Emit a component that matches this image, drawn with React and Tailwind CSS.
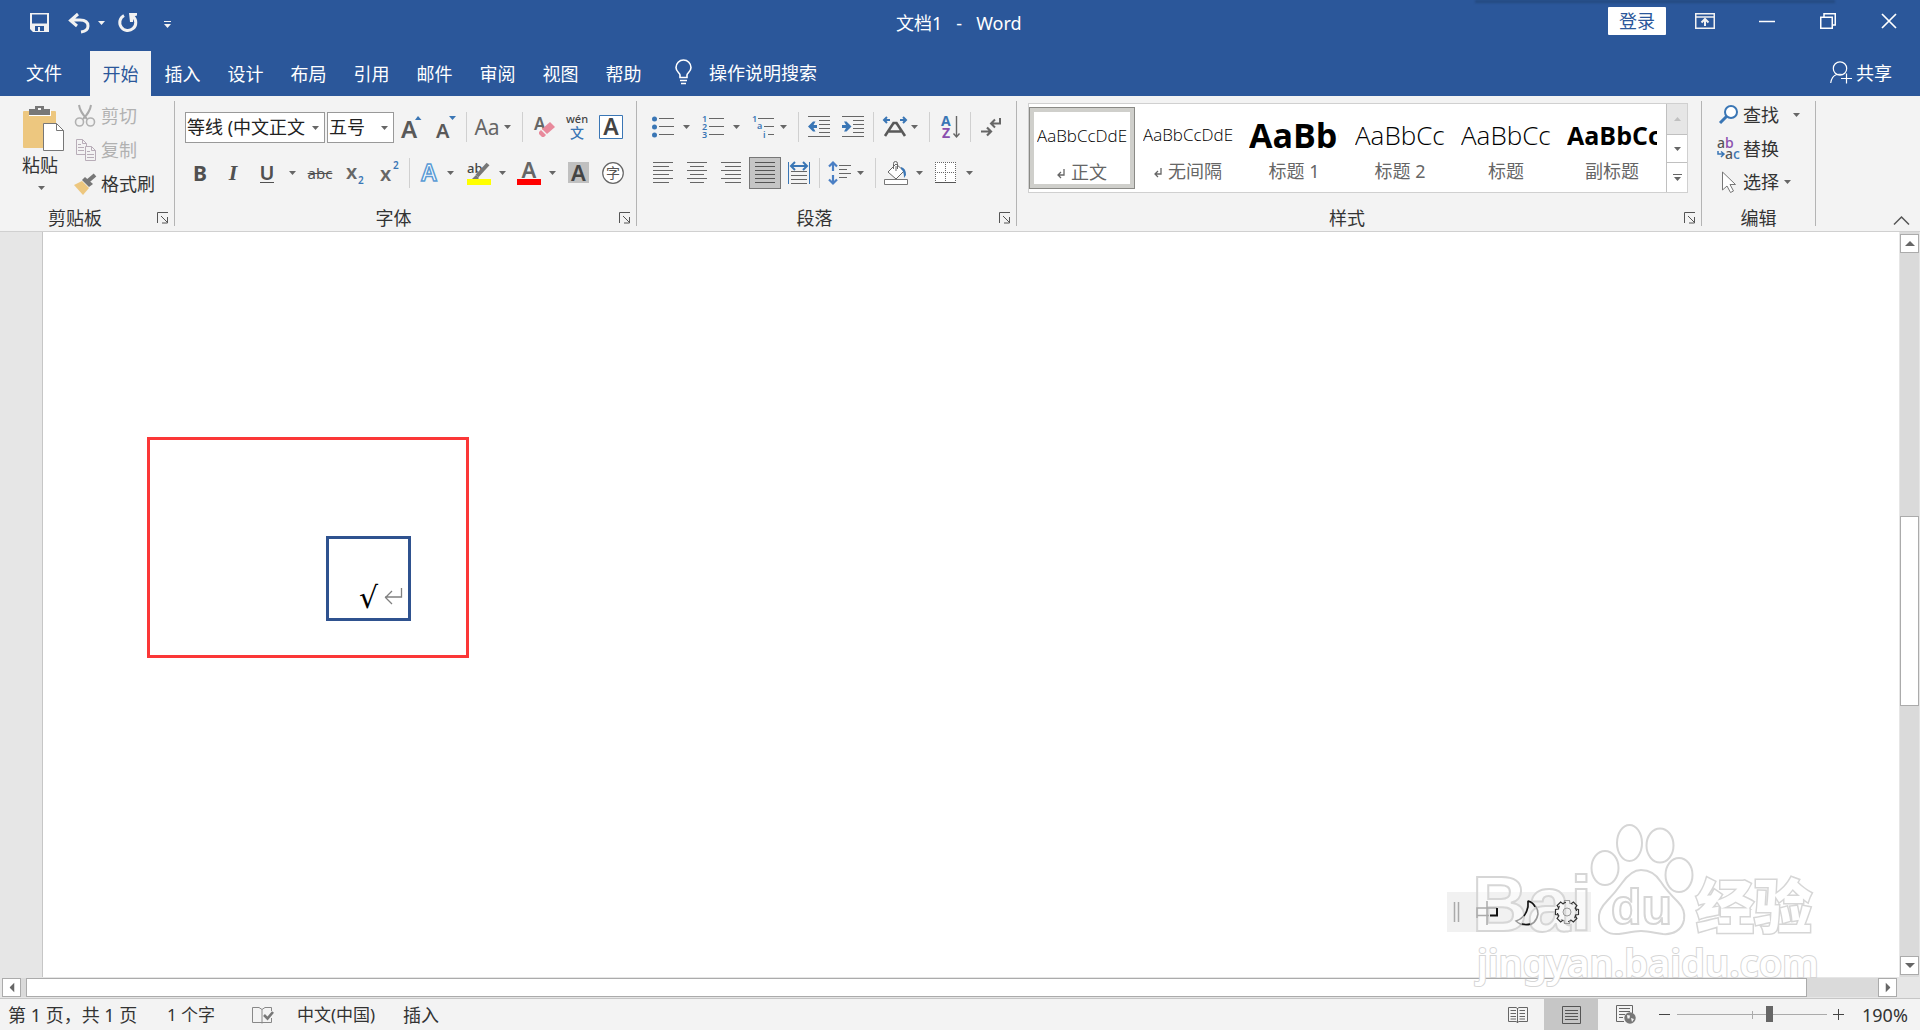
import React from 'react';
import clsx from 'clsx';

const TABS = ['插入', '设计', '布局', '引用', '邮件', '审阅', '视图', '帮助'];

const STYLES = [
    { name: '正文', preview: 'AaBbCcDdE', size: 'text-[17px] font-light', mark: true, active: true },
    { name: '无间隔', preview: 'AaBbCcDdE', size: 'text-[17px] font-light', mark: true },
    { name: '标题 1', preview: 'AaBbC', size: 'text-[34px] font-bold' },
    { name: '标题 2', preview: 'AaBbCc', size: 'text-[26px] font-light' },
    { name: '标题', preview: 'AaBbCc', size: 'text-[26px] font-light' },
    { name: '副标题', preview: 'AaBbCc', size: 'text-[25px] font-bold' }
];

/* ---------- small shared pieces ---------- */

const Caret = ({ className = 'text-[#666]' }) => (
    <svg width="7" height="4" viewBox="0 0 7 4" className={clsx('shrink-0', className)}>
        <path d="M0 0h7L3.5 4z" fill="currentColor" />
    </svg>
);

const Tool = ({ label, className, children }) => (
    <button
        type="button"
        aria-label={label}
        title={label}
        className={clsx('h-8 shrink-0 flex items-center justify-center whitespace-nowrap', className)}
    >
        {children}
    </button>
);

const Drop = ({ label, className }) => (
    <Tool label={`${label}选项`} className={clsx('w-[7px]', className)}>
        <Caret />
    </Tool>
);

const Sep = ({ className }) => <div className={clsx('w-px h-[30px] shrink-0 bg-[#d0d0d0]', className)} />;

const Icon = ({ w = 22, h = 22, children, className }) => (
    <svg width={w} height={h} viewBox={`0 0 ${w} ${h}`} fill="none" className={clsx('shrink-0 overflow-visible', className)}>
        {children}
    </svg>
);

// horizontal rules: list of [x1, x2, y]
const Rules = ({ rows, color = '#666' }) => (
    <path d={rows.map(([a, b, y]) => `M${a} ${y + 0.5}H${b}`).join('')} stroke={color} />
);

const Group = ({ title, launcher = true, className, children }) => (
    <section aria-label={title} className={clsx('flex flex-col shrink-0', className)}>
        <div className="h-28">{children}</div>
        <div className="h-5 flex items-center text-[#333]">
            <span className="flex-1 text-center">{title}</span>
            {launcher && (
                <button type="button" aria-label={`${title}设置`} className="w-6 h-5 flex items-center pl-[7px]">
                    <Icon w={12} h={12}>
                        <path d="M.5 11V.5H11M4 4l6 6M10.500 5v6H5" stroke="#555" />
                    </Icon>
                </button>
            )}
        </div>
    </section>
);

const Divider = () => <div className="w-px shrink-0 bg-[#b4b4b4] mt-[5px] mb-[5px]" />;

/* ---------- title bar and tabs ---------- */

const TitleBar = () => (
    <div className="relative h-[51px] flex items-start justify-between">
        <div className="absolute top-0 right-[85px] w-[360px] h-[3px] bg-[#244a80] blur-[1px]" />
        <div className="flex items-center h-[45px] pl-[30px]">
            <button type="button" aria-label="保存">
                <Icon w={19} h={19}>
                    <path
                        fillRule="evenodd"
                        fill="#f2f2f2"
                        d="M0 0h19v19H3l-3-3zM2 1.500v9h15v-9zM5 13v5h3v-4h2v4h4v-5z"
                    />
                </Icon>
            </button>
            <button type="button" aria-label="撤消" className="ml-[19px]">
                <Icon w={22} h={20}>
                    <path d="M10 1L2.500 7.500 9 13M3 7h9q8 0 8 6 0 5-7 6" stroke="#f2f2f2" strokeWidth="3" />
                </Icon>
            </button>
            <button type="button" aria-label="撤消选项" className="ml-2">
                <Caret className="text-[#f2f2f2]" />
            </button>
            <button type="button" aria-label="重复" className="ml-[13px]">
                <Icon w={20} h={20}>
                    <path d="M6 2.500A8 8 0 1 0 15 3.500" stroke="#f2f2f2" strokeWidth="3" />
                    <path d="M11 0h8v2.500l-3.500 1-.5 5.500h-3z" fill="#f2f2f2" />
                </Icon>
            </button>
            <button type="button" aria-label="自定义快速访问工具栏" className="ml-[26px] mt-1">
                <Icon w={7} h={8}>
                    <path d="M0 .5h7" stroke="#f2f2f2" />
                    <path d="M0 3h7L3.500 7z" fill="#f2f2f2" />
                </Icon>
            </button>
        </div>
        <h1 className="absolute left-1/2 top-[11px] -ml-16 text-white whitespace-pre">文档1   -   Word</h1>
        <div className="relative flex items-center pr-[23px] pt-[7px]">
            <button type="button" className="w-[58px] h-7 bg-white text-[#2b579a] rounded-[1px] leading-7">
                登录
            </button>
            <button type="button" aria-label="功能区显示选项" className="ml-[29px]">
                <Icon w={20} h={16}>
                    <path d="M.75.75h18.500v14.500H.75zM1 4h18" stroke="#f2f2f2" strokeWidth="1.500" />
                    <path d="M10 13V7M6.500 9.500L10 6l3.500 3.500" stroke="#f2f2f2" strokeWidth="2" />
                </Icon>
            </button>
            <button type="button" aria-label="最小化" className="ml-11">
                <Icon w={16} h={16}>
                    <path d="M0 8.500h16" stroke="#fff" strokeWidth="1.500" />
                </Icon>
            </button>
            <button type="button" aria-label="向下还原" className="ml-[45px]">
                <Icon w={16} h={16}>
                    <path d="M.75 4.250h11.500v11H.75zM4 4V.75h11.250V12H12.500" stroke="#fff" strokeWidth="1.500" />
                </Icon>
            </button>
            <button type="button" aria-label="关闭" className="ml-[45px]">
                <Icon w={16} h={16}>
                    <path d="M1 1l14 14M15 1L1 15" stroke="#fff" strokeWidth="1.700" />
                </Icon>
            </button>
        </div>
    </div>
);

const TabRow = () => (
    <nav className="h-[45px] flex items-stretch text-white">
        <button type="button" className="w-[90px] pr-0.5 pb-0.5">文件</button>
        <button type="button" className="w-[61px] bg-[#f3f3f3] text-[#2b579a]">开始</button>
        {TABS.map(tab => (
            <button key={tab} type="button" className="w-[63px] whitespace-nowrap">{tab}</button>
        ))}
        <button type="button" className="flex items-center ml-5 pb-0.5">
            <Icon w={17} h={25}>
                <path
                    d="M5 17.500v-2.500c0-2-4-3-4-7.500a7.500 7.500 0 0 1 15 0c0 4.500-4 5.500-4 7.500v2.500zM5 20.500h7M6 23.500h5"
                    stroke="#fff"
                    strokeWidth="1.600"
                />
            </Icon>
            <span className="ml-[17px]">操作说明搜索</span>
        </button>
        <button type="button" className="flex items-center ml-auto mr-7 pb-0.5">
            <Icon w={22} h={23}>
                <circle cx="10" cy="7.500" r="6.700" stroke="#fff" strokeWidth="1.200" />
                <path d="M.7 22q1-7 6-8.500 3-.5 6 0M16.500 12.500v10M11 17.500h11" stroke="#fff" strokeWidth="1.200" />
            </Icon>
            <span className="ml-1">共享</span>
        </button>
    </nav>
);

/* ---------- ribbon groups ---------- */

const ClipboardGroup = () => (
    <Group title="剪贴板" className="w-[174px]">
        <div className="flex pt-2">
            <button type="button" className="ml-[22px] w-[42px] flex flex-col items-start text-[#333]">
                <Icon w={42} h={48}>
                    <rect x="1" y="7" width="33" height="37" rx="1" fill="#edc77f" />
                    <path d="M7 6h22v6H7z" fill="#fff" />
                    <path d="M7 5h6V2h9v3h6v6H7zM16 4v2h3V4z" fill="#777" fillRule="evenodd" />
                    <path d="M21.500 19.500h13l7 7v20h-20z" fill="#fff" stroke="#777" />
                    <path d="M34.500 19.500v7h7" stroke="#777" />
                </Icon>
                <span className="leading-[26px]">粘贴</span>
                <Caret className="text-[#666] ml-4 mt-2" />
            </button>
            <div className="flex flex-col ml-2.5 -mt-[5px]">
                <button type="button" className="flex items-center h-[34px] text-[#b1b1b1]">
                    <Icon w={22} h={22}>
                        <path d="M5 0q1 7 8 14M17 0q-1 7-8 14" stroke="#aaa" strokeWidth="2" />
                        <circle cx="5.500" cy="17" r="4" stroke="#b1b1b1" strokeWidth="1.600" />
                        <circle cx="16.500" cy="17" r="4" stroke="#b1b1b1" strokeWidth="1.600" />
                    </Icon>
                    <span className="ml-[5px]">剪切</span>
                </button>
                <button type="button" className="flex items-center h-[34px] text-[#b1b1b1]">
                    <Icon w={22} h={22}>
                        <path d="M2.500.5h6l4 4v11h-10zM8.500.5v4h4" stroke="#b8adb8" />
                        <path d="M11.500 7.500h6l4 4v10h-10z" fill="#f3f3f3" stroke="#b8adb8" />
                        <path d="M4 5.500h3M4 8.500h6M4 11.500h6M13 12.500h3M13 15.500h7M13 18.500h7M17.500 7.500v4h4" stroke="#b8adb8" />
                    </Icon>
                    <span className="ml-[5px]">复制</span>
                </button>
                <button type="button" className="flex items-center h-[34px] text-[#333]">
                    <Icon w={22} h={22}>
                        <path d="M0 12l8-4 7 7-6 7z" fill="#edc77f" />
                        <path d="M8 7l3-3 8 7-4 3z" fill="#777" />
                        <path d="M14 8l7-6" stroke="#777" strokeWidth="4" />
                    </Icon>
                    <span className="ml-[5px]">格式刷</span>
                </button>
            </div>
        </div>
    </Group>
);

const Combo = ({ label, value, className }) => (
    <div className={clsx('relative h-[31px] shrink-0', className)}>
        <select
            aria-label={label}
            defaultValue={value}
            className="w-full h-full appearance-none bg-white border border-[#999] pl-px pr-4 text-[#222] overflow-hidden"
        >
            <option>{value}</option>
        </select>
        <Caret className="text-[#666] absolute right-1.5 top-3.5 pointer-events-none" />
    </div>
);

const FontGroup = () => (
    <Group title="字体" className="w-[461px]">
        <div className="flex items-center h-8 mt-[15px] text-[#555]">
            <Combo label="字体名称" value="等线 (中文正文" className="w-[140px] ml-2.5" />
            <Combo label="字号" value="五号" className="w-[67px] ml-0.5" />
            <Tool label="增大字号" className="w-5 ml-2">
                <Icon w={20} h={24}>
                    <text x="-1" y="23" fontSize="24" fontWeight="600" fill="#595959">A</text>
                    <path d="M13 5l3-4 3.500 4z" fill="#3a76b5" />
                </Icon>
            </Tool>
            <Tool label="减小字号" className="w-5 ml-[15px]">
                <Icon w={20} h={24}>
                    <text x="-1" y="23" fontSize="20" fontWeight="600" fill="#595959">A</text>
                    <path d="M12 1h7l-3.500 4z" fill="#3a76b5" />
                </Icon>
            </Tool>
            <Sep className="ml-[9px]" />
            <Tool label="更改大小写" className="w-6 ml-2 text-[21px] text-[#666]">Aa</Tool>
            <Drop label="更改大小写" className="ml-[5px]" />
            <Sep className="ml-[11px]" />
            <Tool label="清除所有格式" className="w-5 ml-3">
                <Icon w={20} h={22}>
                    <text x="-1" y="14" fontSize="17" fontWeight="600" fill="#666">A</text>
                    <path d="M7 13l8-7 5 5-8 7z" fill="#e8899b" />
                    <path d="M6 14l5 5-2 2H7l-3-3v-2z" fill="#e8899b" />
                </Icon>
            </Tool>
            <Tool label="拼音指南" className="w-[22px] ml-[11px]">
                <Icon w={22} h={24}>
                    <text x="11" y="8" fontSize="11" fontWeight="500" textAnchor="middle" fill="#444">wén</text>
                    <text x="11" y="23" fontSize="14" fontWeight="500" textAnchor="middle" fill="#3a76b5">文</text>
                </Icon>
            </Tool>
            <Tool label="字符边框" className="w-6 ml-[11px]">
                <Icon w={24} h={24}>
                    <path d="M.5.5h23v23H.5z" fill="#fff" stroke="#3a76b5" />
                    <text x="12" y="20" fontSize="23" fontWeight="600" textAnchor="middle" fill="#444">A</text>
                </Icon>
            </Tool>
        </div>
        <div className="flex items-center h-8 mt-[14px] text-[#505050]">
            <Tool label="加粗" className="w-4 ml-[17px] text-[21px] font-bold">B</Tool>
            <Tool label="倾斜" className="w-4 ml-[17px] text-[22px] font-bold italic font-['Liberation_Serif',serif]">I</Tool>
            <Tool label="下划线" className="w-4 ml-[18px] text-[20px] font-semibold">
                <span className="border-b border-[#505050] leading-[19px]">U</span>
            </Tool>
            <Drop label="下划线" className="ml-3.5" />
            <Tool label="删除线" className="w-6 ml-3 text-[15px] line-through">abc</Tool>
            <Tool label="下标" className="w-5 ml-[14px]">
                <Icon w={20} h={24}>
                    <text x="0" y="18" fontSize="20" fontWeight="600" fill="#666">x</text>
                    <text x="12" y="23" fontSize="10" fontWeight="600" fill="#3a76b5">2</text>
                </Icon>
            </Tool>
            <Tool label="上标" className="w-5 ml-[14px]">
                <Icon w={20} h={24}>
                    <text x="0" y="20" fontSize="20" fontWeight="600" fill="#666">x</text>
                    <text x="13" y="8" fontSize="10" fontWeight="600" fill="#3a76b5">2</text>
                </Icon>
            </Tool>
            <Sep className="ml-[9px]" />
            <Tool label="文本效果和版式" className="w-[18px] ml-2.5">
                <Icon w={18} h={24}>
                    <text x="9" y="20" fontSize="23" fontWeight="600" textAnchor="middle" fill="#fff" stroke="#5b9bd5" strokeWidth="1.500">A</text>
                </Icon>
            </Tool>
            <Drop label="文本效果" className="ml-[9px]" />
            <Tool label="文本突出显示颜色" className="w-6 ml-[13px]">
                <Icon w={24} h={24}>
                    <text x="0" y="12" fontSize="13" fontWeight="500" fill="#444">ab</text>
                    <path d="M10 15L21 3" stroke="#777" strokeWidth="4" />
                    <path d="M5 18l4-4 3 3-1 1z" fill="#777" />
                    <path d="M0 18h24v6H0z" fill="#ff0" />
                </Icon>
            </Tool>
            <Drop label="突出显示" className="ml-2" />
            <Tool label="字体颜色" className="w-6 ml-[11px]">
                <Icon w={24} h={24}>
                    <text x="12" y="17" fontSize="22" fontWeight="600" textAnchor="middle" fill="#666">A</text>
                    <path d="M0 18h24v6H0z" fill="red" />
                </Icon>
            </Tool>
            <Drop label="字体颜色" className="ml-2" />
            <Tool label="字符底纹" className="w-[21px] ml-3">
                <Icon w={21} h={22}>
                    <path d="M0 0h21v21H0z" fill="#c0c0c0" />
                    <text x="10.500" y="19" fontSize="22" fontWeight="600" textAnchor="middle" fill="#444">A</text>
                </Icon>
            </Tool>
            <Tool label="带圈字符" className="w-[22px] ml-[13px]">
                <Icon w={22} h={22}>
                    <circle cx="11" cy="11" r="10.300" fill="#fff" stroke="#666" strokeWidth="1.200" />
                    <text x="11" y="16" fontSize="14" textAnchor="middle" fill="#555">字</text>
                </Icon>
            </Tool>
        </div>
    </Group>
);

const LINES = [0, 4, 8, 12, 16, 20];

const ParagraphGroup = () => (
    <Group title="段落" className="w-[379px]">
        <div className="flex items-center h-8 mt-[15px]">
            <Tool label="项目符号" className="w-[22px] ml-[15px]">
                <Icon>
                    <circle cx="2.500" cy="3" r="2.500" fill="#3a76b5" />
                    <circle cx="2.500" cy="11" r="2.500" fill="#3a76b5" />
                    <circle cx="2.500" cy="19" r="2.500" fill="#3a76b5" />
                    <Rules rows={[[7, 22, 2], [7, 22, 10], [7, 22, 18]]} />
                </Icon>
            </Tool>
            <Drop label="项目符号" className="ml-[9px]" />
            <Tool label="编号" className="w-[22px] ml-3">
                <Icon w={22} h={24}>
                    <g fontSize="9" fontWeight="600" fill="#3a76b5">
                        <text x="0" y="7">1</text>
                        <text x="0" y="15">2</text>
                        <text x="0" y="23">3</text>
                    </g>
                    <Rules rows={[[7, 22, 3], [7, 22, 11], [7, 22, 19]]} />
                </Icon>
            </Tool>
            <Drop label="编号" className="ml-[9px]" />
            <Tool label="多级列表" className="w-[22px] ml-3">
                <Icon w={22} h={24}>
                    <g fontSize="9" fontWeight="600" fill="#3a76b5">
                        <text x="0" y="7">1</text>
                        <text x="5" y="14">a</text>
                        <text x="11" y="23">i</text>
                    </g>
                    <Rules rows={[[6, 22, 3], [12, 22, 11], [16, 22, 19]]} />
                </Icon>
            </Tool>
            <Drop label="多级列表" className="ml-1.5" />
            <Sep className="ml-[11px]" />
            <Tool label="减少缩进量" className="w-[22px] ml-[9px]">
                <Icon>
                    <Rules rows={[[0, 22, 0], [11, 22, 4], [11, 22, 8], [11, 22, 12], [11, 22, 16], [0, 22, 20]]} />
                    <path d="M0 10.500l5-5h2.500l-2 3.500H9v3H5.500l2 3.500H5z" fill="#3a76b5" />
                </Icon>
            </Tool>
            <Tool label="增加缩进量" className="w-[22px] ml-3">
                <Icon>
                    <Rules rows={[[0, 22, 0], [11, 22, 4], [11, 22, 8], [11, 22, 12], [11, 22, 16], [0, 22, 20]]} />
                    <path d="M9.500 10.500l-5-5H2L4 9H0v3h4l-2 3.500h2.500z" fill="#3a76b5" />
                </Icon>
            </Tool>
            <Sep className="ml-[9px]" />
            <Tool label="中文版式" className="w-6 ml-[9px]">
                <Icon w={24} h={20}>
                    <path d="M4 0L1 3l3 3M1.500 3H7M20 0l3 3-3 3M22.500 3H17" stroke="#3a76b5" strokeWidth="2" />
                    <path d="M2 19L10.500 6h3L22 19M6 14.500h12" stroke="#595959" strokeWidth="2.600" />
                </Icon>
            </Tool>
            <Drop label="中文版式" className="ml-1" />
            <Sep className="ml-[11px]" />
            <Tool label="排序" className="w-[18px] ml-3">
                <Icon w={18} h={24}>
                    <text x="-1" y="11" fontSize="14" fontWeight="700" fill="#3a76b5">A</text>
                    <text x="0" y="23" fontSize="14" fontWeight="700" fill="#8a4fae">Z</text>
                    <path d="M14.500 1v21M11.500 18.500l3 3.500 3-3.500" stroke="#666" strokeWidth="1.400" />
                </Icon>
            </Tool>
            <Sep className="ml-2.5" />
            <Tool label="显示编辑标记" className="w-5 ml-2.5">
                <Icon w={20} h={20}>
                    <path d="M19 1v5.500h-9M14 2.500L10 6.500l4 4" stroke="#666" strokeWidth="2" />
                    <path d="M0 14.500h10M6 10.500l4 4-4 4" stroke="#666" strokeWidth="2.200" />
                </Icon>
            </Tool>
        </div>
        <div className="flex items-center h-8 mt-[14px]">
            <Tool label="左对齐" className="w-5 ml-4">
                <Icon w={20}><Rules rows={LINES.map((y, i) => [0, i % 2 ? 16 : 20, y])} /></Icon>
            </Tool>
            <Tool label="居中" className="w-5 ml-3.5">
                <Icon w={20}><Rules rows={LINES.map((y, i) => (i % 2 ? [3, 17, y] : [0, 20, y]))} /></Icon>
            </Tool>
            <Tool label="右对齐" className="w-5 ml-3.5">
                <Icon w={20}><Rules rows={LINES.map((y, i) => [i % 2 ? 4 : 0, 20, y])} /></Icon>
            </Tool>
            <Tool label="两端对齐" className="w-8 ml-2 bg-[#c5c5c5] border border-[#777]">
                <Icon w={20}><Rules rows={LINES.map(y => [0, 20, y])} color="#555" /></Icon>
            </Tool>
            <Tool label="分散对齐" className="w-[22px] ml-[7px]">
                <Icon>
                    <path d="M.5 0v22M21.500 0v22" stroke="#3a76b5" />
                    <path d="M3 4h16M7 0L3 4l4 4M15 0l4 4-4 4" stroke="#3a76b5" strokeWidth="2" />
                    <Rules rows={[[3, 19, 9], [3, 19, 13], [3, 19, 17], [3, 19, 21]]} />
                </Icon>
            </Tool>
            <Sep className="ml-[9px]" />
            <Tool label="行和段落间距" className="w-[22px] ml-[9px]">
                <Icon w={22} h={24}>
                    <path d="M4 2v8M0 5.500L4 1.500l4 4M4 14v8M0 18.500l4 4 4-4" stroke="#4a7fc4" strokeWidth="2.200" />
                    <Rules rows={[[10, 22, 4], [10, 18, 8], [10, 22, 12], [10, 18, 16]]} />
                </Icon>
            </Tool>
            <Drop label="间距" className="ml-1.5" />
            <Sep className="ml-[11px]" />
            <Tool label="底纹" className="w-6 ml-2">
                <Icon w={24} h={24}>
                    <path d="M4 11l8-8 8 7-8 8z" fill="#fff" stroke="#666" />
                    <path d="M9.500 8V2.500q0-2 2-2t2 2V8M12 5v5" stroke="#666" />
                    <path d="M17 6q5 1 5 8l-2 3q0-7-3-9z" fill="#3a76b5" />
                    <path d="M.5 18.500h23v5H.5z" fill="#fff" stroke="#777" />
                </Icon>
            </Tool>
            <Drop label="底纹" className="ml-2" />
            <Tool label="边框" className="w-[22px] ml-3">
                <Icon>
                    <path d="M0 0h21v21H0z" fill="#fff" />
                    <path d="M0 .5h21M.5 0v21M20.500 0v21M10.500 0v21M0 10.500h21" stroke="#666" strokeDasharray="1 1" />
                    <path d="M0 20.500h21" stroke="#555" />
                </Icon>
            </Tool>
            <Drop label="边框" className="ml-[9px]" />
        </div>
    </Group>
);

const StyleTile = ({ item }) => (
    <button
        type="button"
        className={clsx(
            'w-[106px] h-[82px] shrink-0 flex flex-col items-center',
            item.active && 'border border-[#8a8a86] ring-4 ring-inset ring-[#cfcfcb]'
        )}
    >
        <span
            className={clsx(
                "w-[90px] h-[50px] shrink-0 overflow-hidden whitespace-nowrap text-left text-black font-['Open_Sans','Noto_Sans',sans-serif] leading-[56px]",
                item.size
            )}
        >
            {item.preview}
        </span>
        <span className="flex items-center leading-7 text-[#666]">
            {item.mark && (
                <Icon w={8} h={10} className="mr-1.5 mt-1">
                    <path d="M7 0v6H1M4 3L1 6l3 3" stroke="#666" strokeWidth="1.300" />
                </Icon>
            )}
            {item.name}
        </span>
    </button>
);

const StylesGroup = () => (
    <Group title="样式" className="flex-1 min-w-0">
        <div className="ml-[11px] mr-[13px] mt-[7px] h-[90px] flex bg-white border border-[#d0d0d0]">
            <div className="flex-1 min-w-0 flex items-center overflow-hidden">
                {STYLES.map(item => <StyleTile key={item.name} item={item} />)}
            </div>
            <div className="w-[21px] shrink-0 flex flex-col border-l border-[#c0c0c0]">
                <button type="button" aria-label="上一行" className="flex-1 flex items-center justify-center bg-[#e6e6e6]">
                    <Caret className="text-[#c0c0c0] rotate-180" />
                </button>
                <button type="button" aria-label="下一行" className="h-7 flex items-center justify-center border-t border-[#c0c0c0]">
                    <Caret />
                </button>
                <button type="button" aria-label="其他样式" className="h-[30px] flex items-center justify-center border-t border-[#c0c0c0]">
                    <Icon w={9} h={8}>
                        <path d="M0 .5h9" stroke="#666" />
                        <path d="M1 3h7L4.500 7z" fill="#666" />
                    </Icon>
                </button>
            </div>
        </div>
    </Group>
);

const EditingGroup = () => (
    <Group title="编辑" launcher={false} className="w-[113px]">
        <div className="flex flex-col items-start pt-0.5 pl-[15px] text-[#333]">
            <button type="button" className="flex items-center h-[34px]">
                <Icon w={23} h={20}>
                    <circle cx="14" cy="7" r="6" fill="#fff" stroke="#3a76b5" strokeWidth="2" />
                    <path d="M9.500 11.500L3 18" stroke="#3a76b5" strokeWidth="3" />
                </Icon>
                <span className="ml-[3px]">查找</span>
                <Caret className="text-[#666] ml-3.5" />
            </button>
            <button type="button" className="flex items-center h-[34px]">
                <Icon w={23} h={24}>
                    <g fontSize="14" fontWeight="500" fill="#555">
                        <text x="0" y="11">a<tspan fill="#8a4fae">b</tspan></text>
                        <text x="8" y="22">a<tspan fill="#3a76b5">c</tspan></text>
                    </g>
                    <path d="M1 14v3h5M4 14.500l3 2.500-3 3" stroke="#3a76b5" strokeWidth="1.500" />
                </Icon>
                <span className="ml-[3px]">替换</span>
            </button>
            <button type="button" className="flex items-center h-8">
                <Icon w={23} h={23}>
                    <path d="M5.500 1v18l4.500-4 3.500 6.500 3-1.500-3.500-6.500h5.500z" fill="#fff" stroke="#777" />
                </Icon>
                <span className="ml-[3px]">选择</span>
                <Caret className="text-[#666] ml-[5px]" />
            </button>
        </div>
    </Group>
);

const Ribbon = () => (
    <div className="h-[136px] shrink-0 flex bg-[#f3f3f3] border-b border-[#d0d0d0]">
        <ClipboardGroup />
        <Divider />
        <FontGroup />
        <Divider />
        <ParagraphGroup />
        <Divider />
        <StylesGroup />
        <Divider />
        <EditingGroup />
        <Divider />
        <div className="w-[104px] shrink-0 flex items-end justify-end pr-2.5 pb-1.5">
            <button type="button" aria-label="折叠功能区">
                <Icon w={17} h={9}>
                    <path d="M1 8.500l7.500-7.500L16 8.500" stroke="#555" strokeWidth="1.500" />
                </Icon>
            </button>
        </div>
    </div>
);

/* ---------- document area ---------- */

const ScrollButton = ({ label, className }) => (
    <button
        type="button"
        aria-label={label}
        className="w-[19px] h-[19px] shrink-0 flex items-center justify-center bg-white border border-[#ababab]"
    >
        <svg width="10" height="5" viewBox="0 0 10 5" className={className}>
            <path d="M0 0h10L5 5z" fill="#666" />
        </svg>
    </button>
);

const PAW = 'M201 60c9 0 15 4 20 12s11 14 17 20 7 12 6 18c-2 10-11 15-21 14-8-1-14-3-22-3s-14 2-22 3c-11 1-19-5-20-14-1-7 2-13 8-19s10-11 15-18 11-13 19-13z';

const GEAR_TEETH = [0, 45, 90, 135, 180, 225, 270, 315];

const Watermark = () => (
    <svg
        width="400"
        height="180"
        viewBox="0 0 400 180"
        className="absolute right-20 bottom-2 pointer-events-none overflow-visible"
        fill="#fff"
        stroke="#d6d6d6"
        strokeWidth="1.500"
        fillOpacity="0.6"
    >
        <path d="M7 82h144v40H7z" fill="#f1f1f1" fillOpacity="1" stroke="none" />
        <path d="M14.500 92v20M18.500 92v20" stroke="#aaa" />
        <g fontWeight="700" fontFamily="'Liberation Sans', sans-serif" strokeWidth="2">
            <text x="32" y="121" fontSize="77">Bai</text>
            <ellipse cx="165" cy="58" rx="13.500" ry="17" />
            <ellipse cx="189.500" cy="33" rx="12.500" ry="18" />
            <ellipse cx="220" cy="35.500" rx="13.500" ry="17" />
            <ellipse cx="239" cy="65" rx="13.500" ry="17" />
            <path d={PAW} fillOpacity="1" />
            <text x="171" y="114" fontSize="50">du</text>
            <text
                x="256"
                y="118"
                fontSize="58"
                fontWeight="900"
                strokeWidth="3"
                paintOrder="stroke"
                fillOpacity="1"
                fontFamily="'Noto Sans CJK SC', sans-serif"
            >
                经验
            </text>
        </g>
        <text
            x="37"
            y="167"
            fontSize="38"
            fontWeight="600"
            strokeWidth="2"
            paintOrder="stroke"
            fillOpacity="1"
            fontFamily="'Noto Sans', sans-serif"
        >
            jingyan.baidu.com
        </text>
        <g fill="none">
            <path d="M47 91v24M37 108V98h20M37 105.500h12" stroke="#aaa" />
            <path d="M50 105.500h7V98" stroke="#111" strokeWidth="2" />
            <path d="M76 111q12-4 12-20 10 4 10 13-2 11-12 11-6 0-10-4z" stroke="#999" />
            <path d="M88 91v6q-1 5-4 9M88 91q5 1 7 6M82 114q5 1 8 0" stroke="#111" />
            <circle cx="127" cy="102" r="4" stroke="#999" strokeWidth="1" />
            {GEAR_TEETH.map((angle, i) => (
                <path
                    key={angle}
                    d="M124 93.500l.5-3h5l.5 3q2 0 3 1"
                    transform={`rotate(${angle} 127 102)`}
                    stroke={i % 4 === 0 ? '#999' : '#333'}
                    strokeWidth="1.200"
                />
            ))}
        </g>
    </svg>
);

const DocumentArea = () => (
    <main className="relative flex-1 min-h-0 flex flex-col bg-[#e6e6e6]">
        <div className="flex-1 min-h-0 flex">
            <div className="w-[42px] shrink-0" />
            <div className="flex-1 bg-white border-l border-[#c6c6c6] pl-[104px] pt-[205px] overflow-hidden">
                <div className="w-[322px] h-[221px] border-[3px] border-[#fb3737] pl-44 pt-24">
                    <div className="w-[85px] h-[85px] border-[3px] border-[#2f528f] flex items-end justify-end pr-1.5 pb-1">
                        <span className="text-black text-[30px] leading-8 font-['DejaVu_Sans',sans-serif]">√</span>
                        <Icon w={18} h={17} className="ml-1.5 mb-[9px]">
                            <path d="M17.500 0v9H1M8 3L1.500 9.500 8 16" stroke="#808080" strokeWidth="1.300" />
                        </Icon>
                    </div>
                </div>
            </div>
            <div className="w-[21px] shrink-0 flex flex-col items-center bg-[#dadada] border-x border-[#e6e6e6] pt-0.5 pb-0.5">
                <ScrollButton label="向上滚动" className="rotate-180" />
                <div className="flex-1 w-[19px] pt-[263px] pb-[250px]">
                    <div className="h-full bg-white border border-[#ababab]" />
                </div>
                <ScrollButton label="向下滚动" />
            </div>
        </div>
        <div className="h-[21px] shrink-0 flex items-center pl-0.5 pr-[23px]">
            <ScrollButton label="向左滚动" className="rotate-90" />
            <div className="flex-1 h-[19px] bg-[#dadada] pl-[5px] pr-[71px]">
                <div className="h-full bg-white border border-[#ababab]" />
            </div>
            <ScrollButton label="向右滚动" className="-rotate-90" />
        </div>
        <Watermark />
    </main>
);

const StatusBar = () => (
    <footer className="h-8 shrink-0 flex items-center bg-[#f3f3f3] border-t border-[#c6c6c6] text-[#333]">
        <button type="button" className="ml-2 w-[132px] text-left whitespace-nowrap">第 1 页，共 1 页</button>
        <button type="button" className="ml-[26px] w-[50px] text-[17px] whitespace-nowrap">1 个字</button>
        <button type="button" aria-label="校对" className="ml-9">
            <Icon w={22} h={18}>
                <path d="M10 16.500H.5V1.500H7l3 2 3-2h6.500V5M10 3.500v14M10 16.500h9.500V12" stroke="#888" />
                <path d="M12 9l3.500 3.500L21 6" stroke="#777" strokeWidth="2.600" />
            </Icon>
        </button>
        <button type="button" className="ml-[22px] w-20 text-[17px] whitespace-nowrap">中文(中国)</button>
        <button type="button" className="ml-[27px] whitespace-nowrap">插入</button>
        <button type="button" aria-label="阅读视图" className="ml-auto">
            <Icon w={20} h={18}>
                <path d="M9.500 2v15M.5 1.500H8l1.500 1 1.500-1h8.500v14H11l-1.500 1-1.500-1H.5z" stroke="#666" />
                <path d="M2.500 4.500H8M2.500 7.500H8M2.500 10.500H8M2.500 13H8M11.500 4.500H17M11.500 7.500H17M11.500 10.500H17M11.500 13H17" stroke="#666" />
            </Icon>
        </button>
        <button type="button" aria-label="页面视图" className="ml-4 w-[54px] h-full bg-[#c6c6c6] flex items-center justify-center">
            <Icon w={19} h={18}>
                <path d="M.5.5h18v17H.5zM3 4.500h13M3 7.500h13M3 10.500h13M3 13.500h13" stroke="#555" />
            </Icon>
        </button>
        <button type="button" aria-label="Web 版式视图" className="ml-[18px]">
            <Icon w={20} h={19}>
                <path d="M8 16.500H.5V.5h16V8M3 3.500h11M3 6.500h11M3 9.500h6M3 12.500h4" stroke="#666" />
                <circle cx="14" cy="13" r="5.700" fill="#777" />
                <path d="M11 10l3 .5-.5 3-2 0zM15 13l3 1-2 3z" fill="#f3f3f3" />
            </Icon>
        </button>
        <button type="button" aria-label="缩小" className="ml-[23px]">
            <Icon w={11} h={11}><path d="M0 5.500h11" stroke="#444" /></Icon>
        </button>
        <div className="relative ml-[7px] w-[150px] h-5 flex items-center">
            <span className="absolute left-[75px] top-1.5 w-px h-2 bg-[#aaa]" />
            <input
                type="range"
                aria-label="显示比例"
                min="0"
                max="100"
                defaultValue="62"
                className="relative w-full h-5 appearance-none bg-transparent [&::-webkit-slider-runnable-track]:h-px [&::-webkit-slider-runnable-track]:bg-[#aaa] [&::-webkit-slider-thumb]:appearance-none [&::-webkit-slider-thumb]:w-[7px] [&::-webkit-slider-thumb]:h-4 [&::-webkit-slider-thumb]:-mt-2 [&::-webkit-slider-thumb]:bg-[#666]"
            />
        </div>
        <button type="button" aria-label="放大" className="ml-1.5">
            <Icon w={11} h={11}><path d="M0 5.500h11M5.500 0v11" stroke="#444" /></Icon>
        </button>
        <button type="button" className="ml-[18px] w-[58px] text-left">190%</button>
    </footer>
);

export default function App() {
    return (
        <div className="h-screen flex flex-col overflow-hidden text-[18px] leading-6 font-['Noto_Sans','Noto_Sans_CJK_SC',sans-serif]">
            <header className="shrink-0 bg-[#2b579a]">
                <TitleBar />
                <TabRow />
            </header>
            <Ribbon />
            <DocumentArea />
            <StatusBar />
        </div>
    );
}
